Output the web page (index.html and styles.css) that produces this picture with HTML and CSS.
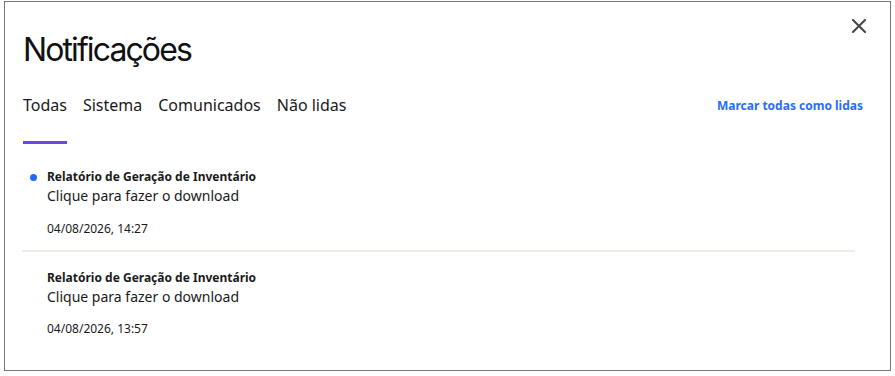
FILE: index.html
```html
<!DOCTYPE html>
<html lang="pt">
<head>
<meta charset="utf-8">
<link rel="stylesheet" href="styles.css">
</head>
<body>
<div class="dialog">
  <button class="close" aria-label="Fechar">
    <svg width="14" height="14" viewBox="0 0 14 14"><path d="M1 1L13 13M13 1L1 13" stroke="#444" stroke-width="2" stroke-linecap="square"/></svg>
  </button>
  <h1 class="title">Notificações</h1>
  <div class="tabbar">
    <div class="tabs">
      <span class="tab active">Todas</span>
      <span class="tab">Sistema</span>
      <span class="tab">Comunicados</span>
      <span class="tab">Não lidas</span>
    </div>
    <a class="markall">Marcar todas como lidas</a>
  </div>
  <ul class="list">
    <li class="item unread">
      <span class="dot"></span>
      <div class="item-title">Relatório de Geração de Inventário</div>
      <div class="item-text">Clique para fazer o download</div>
      <div class="item-date">04/08/2026, 14:27</div>
    </li>
    <li class="item">
      <div class="item-title">Relatório de Geração de Inventário</div>
      <div class="item-text">Clique para fazer o download</div>
      <div class="item-date">04/08/2026, 13:57</div>
    </li>
  </ul>
</div>
</body>
</html>
```
FILE: styles.css
```css
* { box-sizing: border-box; }
html, body { margin: 0; padding: 0; background: #fff; }
body { font-family: "Noto Sans", sans-serif; color: #1a1a1a; }
.dialog {
  position: relative;
  margin: 1px 0 0 4px;
  width: 887px;
  height: 370px;
  border: 1px solid #767676;
  background: #fff;
  padding: 0 0 0 18px;
}
.close {
  position: absolute;
  top: 16px;
  right: 23px;
  width: 16px;
  height: 16px;
  padding: 0;
  border: 0;
  background: none;
  display: flex;
  align-items: center;
  justify-content: center;
}
.title {
  margin: 0;
  padding-top: 28px;
  font-family: Inter, sans-serif;
  font-weight: 400;
  font-size: 32px;
  line-height: 40px;
  letter-spacing: -1.9px;
  color: #111;
}
.tabbar {
  display: flex;
  justify-content: space-between;
  align-items: flex-start;
  margin-top: 23px;
  padding-right: 27px;
}
.tabs { display: flex; gap: 16px; }
.tab {
  font-size: 16px;
  line-height: 24px;
  color: #1a1a1a;
  padding-bottom: 24px;
  border-bottom: 3px solid transparent;
}
.tab.active { border-bottom-color: #6b45e8; }
.markall {
  font-size: 12px;
  font-weight: 700;
  color: #2a6df5;
  line-height: 24px;
  margin-top: 1px;
}
.list {
  list-style: none;
  margin: 24px 0 0 -1px;
  padding: 0;
  width: 833px;
}
.item {
  position: relative;
  padding: 0 0 13px 25px;
}
.item + .item { border-top: 2px solid #f1ece8; padding-top: 17px; }
.item + .item .item-date { margin-top: 14px; }
.dot {
  position: absolute;
  left: 8px;
  top: 6px;
  width: 7px;
  height: 7px;
  border-radius: 50%;
  background: #1f6bff;
}
.item-title {
  font-size: 12px;
  font-weight: 700;
  line-height: 18px;
  color: #1a1a1a;
}
.item-text {
  font-size: 14px;
  line-height: 20px;
  color: #1a1a1a;
}
.item-date {
  margin-top: 15px;
  font-size: 12px;
  line-height: 16px;
  color: #1a1a1a;
}
```
